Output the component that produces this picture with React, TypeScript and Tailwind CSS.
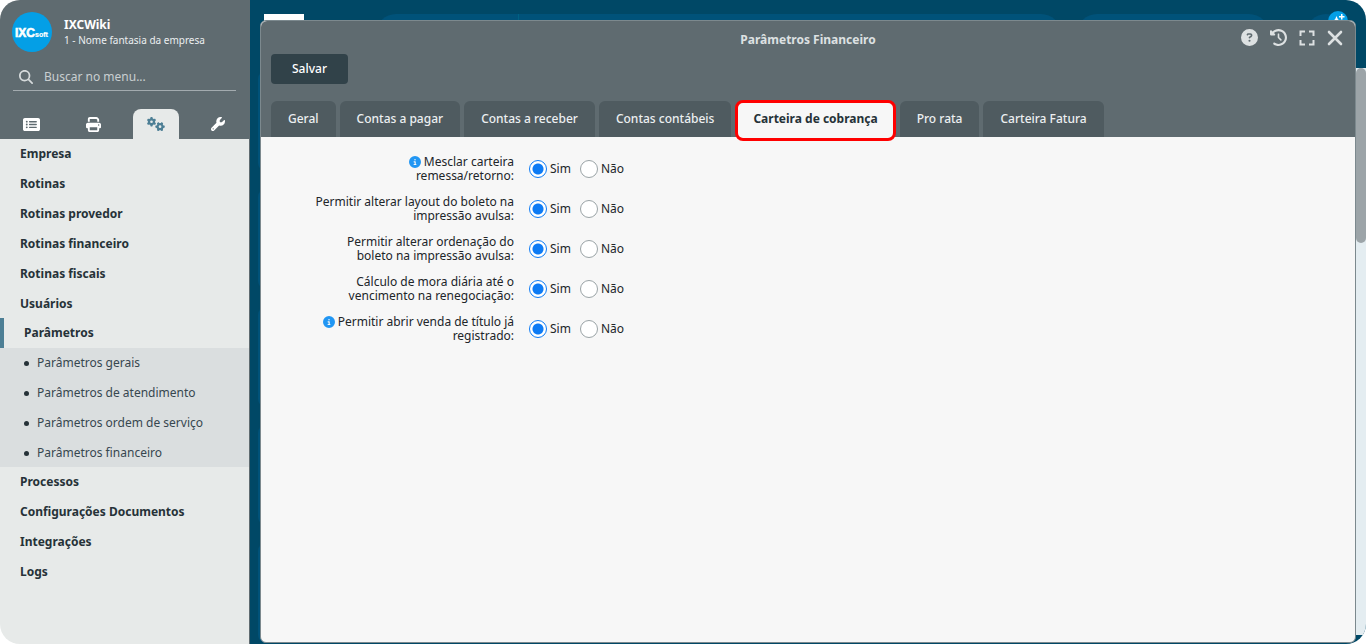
import { useState } from "react";
import type { ReactNode } from "react";
import {
  FaCircleInfo,
  FaCircleQuestion,
  FaClockRotateLeft,
  FaGears,
  FaMagnifyingGlass,
  FaPrint,
  FaRectangleList,
  FaWrench,
} from "react-icons/fa6";

type Param = {
  id: string;
  label: string;
  info?: boolean;
};

const menuTop = [
  "Empresa",
  "Rotinas",
  "Rotinas provedor",
  "Rotinas financeiro",
  "Rotinas fiscais",
  "Usuários",
];

const submenu = [
  "Parâmetros gerais",
  "Parâmetros de atendimento",
  "Parâmetros ordem de serviço",
  "Parâmetros financeiro",
];

const menuBottom = ["Processos", "Configurações Documentos", "Integrações", "Logs"];

const tabs = [
  "Geral",
  "Contas a pagar",
  "Contas a receber",
  "Contas contábeis",
  "Carteira de cobrança",
  "Pro rata",
  "Carteira Fatura",
];

const params: Param[] = [
  { id: "mesclar", label: "Mesclar carteira remessa/retorno:", info: true },
  { id: "layout", label: "Permitir alterar layout do boleto na impressão avulsa:" },
  { id: "ordenacao", label: "Permitir alterar ordenação do boleto na impressão avulsa:" },
  { id: "mora", label: "Cálculo de mora diária até o vencimento na renegociação:" },
  { id: "venda", label: "Permitir abrir venda de título já registrado:", info: true },
];

function MenuLink({ children }: { children: ReactNode }) {
  return (
    <a href="#" className="flex h-[30px] items-center pl-5 font-bold text-[#263238]">
      {children}
    </a>
  );
}

function Sidebar() {
  return (
    <aside className="flex w-[250px] shrink-0 flex-col border-r border-[#5f6b70] bg-[#e7eae9]">
      <header className="bg-[#5f6b70] text-white">
        <div className="flex items-center gap-3 pt-3 pl-3">
          <svg viewBox="0 0 40 40" className="size-10" role="img" aria-label="IXCsoft">
            <circle cx="20" cy="20" r="20" fill="#049fe6" />
            <g fill="#fff" stroke="#fff" fontFamily="'Liberation Sans', sans-serif" fontWeight="700">
              <text x="3" y="25" fontSize="12" strokeWidth="0.6">IXC</text>
              <text x="23" y="25" fontSize="7" strokeWidth="0.2">soft</text>
            </g>
          </svg>
          <div>
            <div className="text-xs leading-4 font-bold">IXCWiki</div>
            <div className="text-[10px] leading-[14px] text-[#eceff1]">1 - Nome fantasia da empresa</div>
          </div>
        </div>
        <label className="mx-[13px] mt-3 flex h-[27px] items-center gap-[11px] border-b border-[#a3abaf] pl-1.5 text-[#d5dadb]">
          <FaMagnifyingGlass className="size-3.5 shrink-0" />
          <input
            type="text"
            aria-label="Buscar no menu"
            placeholder="Buscar no menu..."
            className="w-full bg-transparent text-xs outline-none placeholder:text-[#c9cfd1]"
          />
        </label>
        <div className="mt-[18px] grid h-[30px] grid-cols-4">
          <button aria-label="Lista" className="flex items-center justify-center">
            <FaRectangleList className="size-[17px]" />
          </button>
          <button aria-label="Imprimir" className="flex items-center justify-center">
            <FaPrint className="size-[15px]" />
          </button>
          <button
            aria-label="Configurações"
            className="mx-2 flex items-center justify-center rounded-t-lg bg-[#e7eae9] text-[#4d7f95]"
          >
            <FaGears className="size-[18px]" />
          </button>
          <button aria-label="Ferramentas" className="flex items-center justify-center">
            <FaWrench className="size-3.5" />
          </button>
        </div>
      </header>
      <nav className="text-xs">
        {menuTop.map((item) => (
          <MenuLink key={item}>{item}</MenuLink>
        ))}
        <a
          href="#"
          className="-mt-px flex h-[30px] items-center border-l-4 border-[#4d7f95] pl-5 font-bold text-[#263238]"
        >
          Parâmetros
        </a>
        <div className="bg-[#dadedf]">
          {submenu.map((item) => (
            <a key={item} href="#" className="flex h-[30px] items-center gap-2 pl-6 text-[#37474f]">
              <span className="size-[5px] rounded-full bg-[#263238]" />
              {item}
            </a>
          ))}
        </div>
        <div className="-mt-px bg-[#e7eae9]">
          {menuBottom.map((item) => (
            <MenuLink key={item}>{item}</MenuLink>
          ))}
        </div>
      </nav>
    </aside>
  );
}

// Dimmed page behind the window: top bar, cards, content area and its scrollbar.
function Backdrop() {
  return (
    <div className="absolute inset-0 bg-[#004866]" aria-hidden="true">
      <div className="absolute top-3.5 left-3.5 h-8 w-10 bg-white" />
      <div className="absolute top-3.5 right-[305px] left-[126px] h-10 rounded-full bg-[#005279]" />
      <div className="absolute top-3.5 left-[268px] h-8 w-px bg-[#006183]" />
      <div className="absolute top-3.5 right-[97px] h-10 w-[192px] rounded-full bg-[#005279]" />
      <div className="absolute top-3.5 right-[20px] size-10 rounded-full bg-[#005279]" />
      <svg viewBox="0 0 20 20" className="absolute top-[11px] right-[18px] size-5">
        <circle cx="10" cy="10" r="10" fill="#049fe6" />
        <path
          fill="#fff"
          d="M8.500 5l1.500 3.500 3.500 1.500-3.500 1.500L8.500 15 7 11.500 3.500 10 7 8.500zM13 3h1.500v2h2v1.500h-2v2H13v-2h-2V5h2z"
        />
      </svg>
      <div className="absolute top-[71px] left-2 flex flex-col gap-[18px]">
        {[1, 2, 3, 4, 5].map((n) => (
          <div key={n} className="h-[100px] w-10 rounded-lg bg-[#005279]" />
        ))}
      </div>
      <div className="absolute top-[68px] right-0 bottom-[9px] w-2.5 bg-[#e4edf1]">
        <div className="h-[175px] rounded-md bg-[#9ca4a8]" />
      </div>
    </div>
  );
}

function FinanceWindow() {
  const [tab, setTab] = useState("Carteira de cobrança");
  const [values, setValues] = useState<Record<string, string>>({});

  return (
    <section className="relative mt-5 mr-2.5 mb-px ml-2.5 flex flex-1 flex-col rounded-md border border-[#7c898e] bg-[#f7f7f7]">
      <header className="rounded-t-md bg-[#5f6b70]">
        <div className="grid h-[33px] grid-cols-[1fr_auto_1fr] items-center text-[#dde1e2]">
          <h1 className="col-start-2 pt-1 text-xs font-bold">Parâmetros Financeiro</h1>
          <div className="flex items-center justify-end gap-3 pr-3">
            <button aria-label="Ajuda"><FaCircleQuestion className="size-[17px]" /></button>
            <button aria-label="Histórico"><FaClockRotateLeft className="size-[17px]" /></button>
            <button aria-label="Tela cheia">
              <svg viewBox="0 0 16 16" className="size-4" fill="none" stroke="currentColor" strokeWidth="2">
                <path d="M1.500 6V1.500H6M10 1.500h4.500V6M14.500 10v4.500H10M6 14.500H1.500V10" />
              </svg>
            </button>
            <button aria-label="Fechar">
              <svg viewBox="0 0 16 16" className="size-4" stroke="currentColor" strokeWidth="2.600" strokeLinecap="round">
                <path d="M2 2l12 12M14 2L2 14" />
              </svg>
            </button>
          </div>
        </div>
        <button className="ml-2.5 block h-[30px] w-[77px] rounded bg-[#314249] text-xs font-medium text-white">
          Salvar
        </button>
        <div role="tablist" className="mt-[17px] ml-2.5 flex h-9 gap-1 text-xs">
          {tabs.map((t) =>
            t === tab ? (
              <button
                key={t}
                role="tab"
                aria-selected="true"
                className="z-10 -mt-px h-[41px] rounded-lg border-3 border-[#ff0000] bg-[#f7f7f7] px-[15px] pb-1 font-bold text-[#263238]"
              >
                {t}
              </button>
            ) : (
              <button
                key={t}
                role="tab"
                aria-selected="false"
                onClick={() => setTab(t)}
                className="rounded-t-md bg-[#4f5b60] px-[17px] font-medium text-[#eceff1]"
              >
                {t}
              </button>
            ),
          )}
        </div>
      </header>
      <form className="flex flex-col gap-3 pt-[18px] text-xs text-[#212529]">
        {params.map((p) => (
          <div key={p.id} role="radiogroup" aria-labelledby={p.id} className="flex h-7 items-center gap-[15px]">
            <div id={p.id} className="ml-[52px] w-[201px] text-right leading-[14px]">
              {p.info && <FaCircleInfo className="mr-[3px] inline size-3 align-[-2px] text-[#2196f3]" />}
              {p.label}
            </div>
            <div className="flex gap-[9px]">
              {["Sim", "Não"].map((opt) => (
                <label key={opt} className="flex items-center gap-[3px]">
                  <input
                    type="radio"
                    name={p.id}
                    checked={(values[p.id] ?? "Sim") === opt}
                    onChange={() => setValues({ ...values, [p.id]: opt })}
                    className="size-[18px] appearance-none rounded-full border border-[#9aa3a6] bg-white checked:border-[#0d7bf5] checked:bg-[radial-gradient(circle,#0d7bf5_5px,#ffffff_6px)]"
                  />
                  {opt}
                </label>
              ))}
            </div>
          </div>
        ))}
      </form>
    </section>
  );
}

export default function App() {
  return (
    <div className="flex h-screen overflow-hidden rounded-[20px] bg-white font-['Noto_Sans','Open_Sans',sans-serif]">
      <Sidebar />
      <main className="relative flex flex-1">
        <Backdrop />
        <FinanceWindow />
      </main>
    </div>
  );
}
